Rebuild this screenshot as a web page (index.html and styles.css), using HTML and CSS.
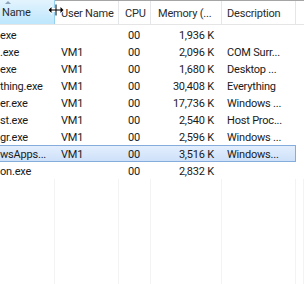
FILE: index.html
```html
<!DOCTYPE html>
<html lang="en">
<head>
  <meta charset="UTF-8" />
  <title>Processes</title>
  <link rel="stylesheet" href="styles.css">
</head>
<body>
  <div class="list-view">
    <div class="header">
      <div class="col c-name hot"><span class="sort"></span>Name</div>
      <div class="col c-user">User Name</div>
      <div class="col c-cpu">CPU</div>
      <div class="col c-mem">Memory (...</div>
      <div class="col c-desc">Description</div>
      <div class="col c-rest"></div>
      <svg class="cursor" width="18" height="14" viewBox="0 0 18 14">
        <path d="M8 1h2v4h3V2l4.5 5-4.5 5V9h-3v4H8V9H5v3L0.5 7 5 2v3h3z" fill="#fff"/>
        <path d="M8.5 1.5h1v11h-1zM1.5 7l3-3v2.5h4v1h-4V10zM16.5 7l-3-3v2.5h-4v1h4V10z" fill="#000"/>
      </svg>
    </div>
    <div class="rows">
      <div class="row"><div class="col c-name">exe</div><div class="col c-user"></div><div class="col c-cpu">00</div><div class="col c-mem">1,936 K</div><div class="col c-desc"></div><div class="col c-rest"></div></div>
      <div class="row"><div class="col c-name">.exe</div><div class="col c-user">VM1</div><div class="col c-cpu">00</div><div class="col c-mem">2,096 K</div><div class="col c-desc">COM Surr...</div><div class="col c-rest"></div></div>
      <div class="row"><div class="col c-name">exe</div><div class="col c-user">VM1</div><div class="col c-cpu">00</div><div class="col c-mem">1,680 K</div><div class="col c-desc">Desktop ...</div><div class="col c-rest"></div></div>
      <div class="row"><div class="col c-name">thing.exe</div><div class="col c-user">VM1</div><div class="col c-cpu">00</div><div class="col c-mem">30,408 K</div><div class="col c-desc">Everything</div><div class="col c-rest"></div></div>
      <div class="row"><div class="col c-name">er.exe</div><div class="col c-user">VM1</div><div class="col c-cpu">00</div><div class="col c-mem">17,736 K</div><div class="col c-desc">Windows ...</div><div class="col c-rest"></div></div>
      <div class="row"><div class="col c-name">st.exe</div><div class="col c-user">VM1</div><div class="col c-cpu">00</div><div class="col c-mem">2,540 K</div><div class="col c-desc">Host Proc...</div><div class="col c-rest"></div></div>
      <div class="row"><div class="col c-name">gr.exe</div><div class="col c-user">VM1</div><div class="col c-cpu">00</div><div class="col c-mem">2,596 K</div><div class="col c-desc">Windows ...</div><div class="col c-rest"></div></div>
      <div class="row selected"><div class="col c-name">wsApps...</div><div class="col c-user">VM1</div><div class="col c-cpu">00</div><div class="col c-mem">3,516 K</div><div class="col c-desc">Windows...</div><div class="col c-rest"></div></div>
      <div class="row"><div class="col c-name">on.exe</div><div class="col c-user"></div><div class="col c-cpu">00</div><div class="col c-mem">2,832 K</div><div class="col c-desc"></div><div class="col c-rest"></div></div>
    </div>
    <div class="filler">
      <div class="col c-name"></div><div class="col c-user"></div><div class="col c-cpu"></div><div class="col c-mem"></div><div class="col c-desc"></div><div class="col c-rest"></div>
    </div>
  </div>
</body>
</html>
```
FILE: styles.css
```css
html, body {
  margin: 0;
  padding: 0;
  background: #fff;
}
.list-view {
  width: 304px;
  height: 284px;
  display: flex;
  flex-direction: column;
  overflow: hidden;
  font-family: Roboto, sans-serif;
  font-size: 11px;
  letter-spacing: -0.2px;
  color: #1a1a1a;
}
.header {
  position: relative;
  display: flex;
  height: 23px;
  border-top: 1px solid #a5a5a5;
  border-bottom: 1px solid #e5e5e5;
  margin-bottom: 1px;
}
.header .col {
  line-height: 25px;
  padding: 0 4px;
  color: #2b2b2b;
  border-right: 1px solid #e4e6ea;
}
.header .hot {
  position: relative;
  margin-top: -1px;
  line-height: 26px;
  background: linear-gradient(#e3f4fd, #bde6fd);
  border-right: 1px solid #96d0ef;
}
.sort {
  position: absolute;
  left: 5px;
  top: 1px;
  width: 0;
  height: 0;
  border-left: 3px solid transparent;
  border-right: 3px solid transparent;
  border-bottom: 3px solid #8aa3bb;
}
.cursor {
  position: absolute;
  left: 47px;
  top: 2px;
}
.col {
  box-sizing: border-box;
  flex: none;
  white-space: nowrap;
  overflow: hidden;
}
.c-name { width: 55px; }
.c-user { width: 64px; }
.c-cpu { width: 32px; }
.c-mem { width: 71px; }
.c-desc { width: 74px; }
.c-rest { flex: 1; }
.header .c-name { padding-left: 2px; }
.header .c-user { padding-left: 6px; }
.header .c-cpu { padding-left: 6px; }
.header .c-mem { padding-left: 7px; }
.header .c-desc { padding-left: 5px; }
.rows {
  display: flex;
  flex-direction: column;
}
.row {
  display: flex;
  height: 17px;
  width: 296px;
}
.row .col {
  padding: 1px 4px 0;
  line-height: 17px;
}
.row .c-name { padding-left: 0; }
.row .c-user { padding-left: 6px; }
.row .c-cpu { padding-left: 9px; }
.row .c-mem { text-align: right; padding-right: 8px; }
.row .c-desc { padding-left: 5px; }
.row.selected {
  background: linear-gradient(#e4effd, #cde0f9);
  box-shadow: inset 0 1px #84acdd, inset 0 -1px #84acdd, inset -1px 0 #84acdd;
}
.filler {
  flex: 1;
  display: flex;
}
.filler .col {
  border-right: 1px solid #f3f3f3;
}
```
